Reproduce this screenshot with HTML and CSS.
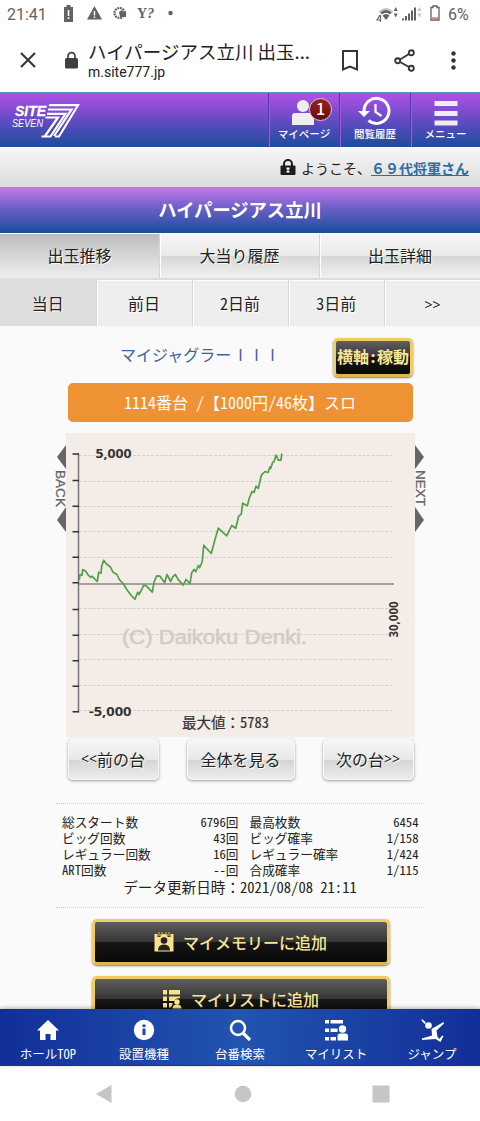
FILE: index.html
```html
<!DOCTYPE html>
<html lang="ja">
<head>
    <meta charset="UTF-8">
    <meta name="viewport" content="width=device-width, initial-scale=1.0">
    <title>ハイパージアス立川 出玉推移</title>
    <link rel="stylesheet" href="styles.css">
</head>
<body>
<div class="screen">

    <div class="status">
        <span class="time">21:41</span>
        <svg class="status-left" width="120" height="20" viewBox="0 0 120 20" fill="#626262">
            <path d="M4 3h2.500V1h4v2H13v15H4z"/>
            <path d="M7.700 6h1.600v6H7.700zM7.700 13.200h1.600v1.800H7.700z" fill="#fff"/>
            <path d="M34.500 2L42 15.500H27z"/>
            <path d="M33.700 7h1.500v4.500h-1.500zM33.700 12.500h1.500V14h-1.500z" fill="#fff"/>
            <circle cx="59.500" cy="9" r="5" fill="none" stroke="#626262" stroke-width="2.200" stroke-dasharray="1.800 .8"/>
            <path d="M59 8l3-2 1 2 3-1v6h-6z"/>
            <circle cx="110.500" cy="9" r="2.200"/>
        </svg>
        <span class="yahoo">Y<i>?</i></span>
        <svg class="status-right" width="66" height="20" viewBox="0 0 66 20">
            <path d="M1.500 7.500q7.500-7 15 0l-2 2q-5.500-5-11 0z" fill="#c4c4c4"/>
            <path d="M3.500 8.500q5.500-5 11 0l-1.500 2q-4-3.500-8 0zM5.500 11.500q3.500-3 7 0L9 16z" fill="#626262"/>
            <path d="M3 11l-3 5h4M3.500 11v7" fill="none" stroke="#626262" stroke-width="1.200"/>
            <path d="M18.700 3l2 4h-4zM18.700 13.500l-2-4h4z" fill="#626262"/>
            <path d="M25 16.500h2v-2h-2zM28 16.500h2V12h-2zM31 16.500h2V9.500h-2zM34 16.500h2V6.500h-2zM37 16.500h2V3.500h-2z" fill="#626262"/>
            <path d="M42.500 3l2 4h-4zM42.500 13.500l-2-4h4z" fill="#c4c4c4"/>
            <path d="M54 3.500h2V2h4v1.500h2V16h-8z" fill="none" stroke="#626262" stroke-width="1.300"/>
            <path d="M54.700 14h6.600" stroke="#e0755c" stroke-width="1.600"/>
        </svg>
        <span class="percent">6%</span>
    </div>

    <div class="browser-bar">
        <svg class="close" width="16" height="16" viewBox="0 0 16 16"><path d="M1 1l14 14M15 1L1 15" stroke="#33373a" stroke-width="2.100"/></svg>
        <svg class="lock" width="13" height="17" viewBox="0 0 13 17">
            <rect y="6" width="13" height="10.500" rx="1.500" fill="#3c4043"/>
            <path d="M3 7V4.200a3.500 3.500 0 0 1 7 0V7" fill="none" stroke="#3c4043" stroke-width="1.700"/>
        </svg>
        <div class="page-info">
            <div class="page-title">ハイパージアス立川 出玉...</div>
            <div class="page-url">m.site777.jp</div>
        </div>
        <svg class="bookmark" width="16" height="21" viewBox="0 0 16 21"><path d="M1 1h14v18.500l-7-3-7 3z" fill="none" stroke="#33373a" stroke-width="2"/></svg>
        <svg class="share" width="21" height="23" viewBox="0 0 21 23" fill="none" stroke="#33373a" stroke-width="1.900">
            <path d="M6 10.500l9-5.500M6 13l9 5"/><circle cx="3.700" cy="11.700" r="2.500"/><circle cx="17.300" cy="3.700" r="2.500"/><circle cx="17.300" cy="19.300" r="2.500"/>
        </svg>
        <svg class="more" width="5" height="19" viewBox="0 0 5 19" fill="#33373a"><circle cx="2.500" cy="2.500" r="2.200"/><circle cx="2.500" cy="9.500" r="2.200"/><circle cx="2.500" cy="16.500" r="2.200"/></svg>
    </div>

    <div class="header">
        <div class="logo">
            <svg width="70" height="36" viewBox="0 0 70 36">
                <text class="logo-site" x="4" y="13.500" textLength="31" lengthAdjust="spacingAndGlyphs">SITE</text>
                <text class="logo-seven" x="1" y="24.500" textLength="31" lengthAdjust="spacingAndGlyphs">SEVEN</text>
                <g fill="none" stroke="#fff" stroke-width="2.200">
                    <path d="M38 3.200h29L48 34.500h-4"/>
                    <path d="M37 7.500h23.500L43 34"/>
                    <path d="M36 11.800h18.500L39.500 34.500h-9"/>
                    <path d="M34.500 15.500h12.500L34 34"/>
                </g>
            </svg>
        </div>
        <div class="menu">
            <div class="icon-box">
                <svg width="40" height="34" viewBox="0 0 40 34" fill="#eee">
                    <circle cx="19" cy="13" r="6"/><path d="M8 32V23q0-3 3-3h16q3 0 3 3v9z"/>
                </svg>
                <span class="badge">1</span>
            </div>
            <span>マイページ</span>
        </div>
        <div class="menu">
            <svg width="40" height="34" viewBox="0 0 40 34">
                <path d="M9 18A12.500 12.500 0 1 1 13.500 27.500" fill="none" stroke="#fff" stroke-width="3"/>
                <path d="M3 18h12l-6 6z" fill="#fff"/>
                <path d="M20.500 11v8l6 4" fill="none" stroke="#fff" stroke-width="2.200"/>
            </svg>
            <span>閲覧履歴</span>
        </div>
        <div class="menu">
            <svg width="40" height="34" viewBox="0 0 40 34" fill="#eee"><path d="M8.500 8h23v5h-23zM8.500 18h23v5h-23zM8.500 27.500h23v5h-23z"/></svg>
            <span>メニュー</span>
        </div>
    </div>

    <div class="welcome">
        <svg width="16" height="17" viewBox="0 0 16 17">
            <path d="M4 8V5a4 4 0 0 1 8 0v3" fill="none" stroke="#1c1c1c" stroke-width="2"/>
            <rect x=".5" y="6.500" width="15" height="9.500" rx="1" fill="#1c1c1c"/>
            <path d="M6.500 8.500h3v2h-1V12h1v1.500h-3V12h1v-1.500h-1z" fill="#fff"/>
        </svg>
        <span>ようこそ、</span><a href="#">６９代将軍さん</a>
    </div>

    <h1>ハイパージアス立川</h1>

    <div class="tabs">
        <div class="tab active">出玉推移</div>
        <div class="tab">大当り履歴</div>
        <div class="tab">出玉詳細</div>
    </div>

    <div class="days">
        <div class="day active">当日</div>
        <div class="day">前日</div>
        <div class="day">2日前</div>
        <div class="day">3日前</div>
        <div class="day"><span class="arrows">&gt;&gt;</span></div>
    </div>

    <div class="content">
        <div class="machine">
            <span class="machine-name">マイジャグラー<span class="roman">III</span></span>
            <button class="gold axis">横軸:稼動</button>
        </div>
        <div class="number">1114番台 /【1000円/46枚】スロ</div>

        <div class="chart-row">
            <svg class="side" width="12" height="90" viewBox="0 0 12 90" fill="#666">
                <path d="M12 0v24L3 12zM12 62v25L3 75z"/>
                <text class="side-text" transform="translate(1.500 25) rotate(90)" textLength="37" lengthAdjust="spacingAndGlyphs">BACK</text>
            </svg>
            <svg class="chart" width="349" height="304" viewBox="66 433.500 349 304">
                <g stroke="#d5d0cd" stroke-dasharray="3 1.500">
                    <path d="M79 456h315M79 482h315M79 507h315M79 532h315M79 558h315M79 609h315M79 635h315M79 660h315M79 686h315M79 711h315"/>
                </g>
                <text class="copyright" x="122" y="644.500" textLength="185" lengthAdjust="spacingAndGlyphs">(C) Daikoku Denki.</text>
                <path d="M78.500 454v259" stroke="#777" stroke-width="1.500"/>
                <path d="M72.500 454.500h6.500M72.500 481h6.500M72.500 506.700h6.500M72.500 532.300h6.500M72.500 557.700h6.500M72.500 583.300h6.500M72.500 610h6.500M72.500 635.700h6.500M72.500 661.300h6.500M72.500 686.700h6.500M72.500 712.300h6.500" stroke="#333" stroke-width="1.500"/>
                <path d="M79 584.500h315" stroke="#888" stroke-width="1.600"/>
                <polyline class="line" points="79.3,580.7 80,575 82,575.7 82.7,570 85.7,571.7 88.3,575.7 90.7,578 92,576.7 97.3,582 98.7,572.7 101,573.7 101.7,566.7 103.7,560.7 106.7,564.7 110.3,567.3 113,572.7 117,575 119.3,580 123.3,584.3 127.3,590.7 131.3,596 135,599.7 137.7,592.7 139,595 141.7,590 143.7,585.7 146.3,586.3 152.3,592.7 154,582.7 156.7,576.3 160,576.7 164.7,583.3 167,575 170.7,582 172.7,577.3 175.3,575 178.7,580.7 183.3,585.7 186,580 190,584 191.7,573.3 194,570 195.7,572.3 198.3,566 199.7,568.3 202.3,562 203.7,545.7 211.3,554 215,540 218.3,528.7 226.7,536.3 231.7,526 235.7,528.7 238.7,516.7 241.3,514.7 242.7,503.7 247.3,506.3 249.3,498.7 252,492 254,493 256,486.7 258.3,489 261.3,475.7 265,472 268,473 270,467.3 270.7,469 272.7,462.7 274,462.3 276,455.7 278.3,460.7 281,460.7 281.7,454"/>
                <text class="scale" x="95.500" y="458" textLength="36" lengthAdjust="spacingAndGlyphs">5,000</text>
                <text class="scale" x="89" y="716" textLength="42.500" lengthAdjust="spacingAndGlyphs">-5,000</text>
                <text class="scale" transform="translate(397.500 638) rotate(-90)" textLength="36" lengthAdjust="spacingAndGlyphs">30,000</text>
                <text class="max" x="182" y="728">最大値：<tspan class="half">5783</tspan></text>
            </svg>
            <svg class="side" width="12" height="90" viewBox="0 0 12 90" fill="#666">
                <path d="M0 0v24l9-12zM0 62v25l9-12z"/>
                <text class="side-text" transform="translate(.5 25) rotate(90)" textLength="36" lengthAdjust="spacingAndGlyphs">NEXT</text>
            </svg>
        </div>

        <div class="pager">
            <button class="silver"><span class="arrows">&lt;&lt;</span>前の台</button>
            <button class="silver wide">全体を見る</button>
            <button class="silver">次の台<span class="arrows">&gt;&gt;</span></button>
        </div>

        <div class="data">
            <div class="stats">
                <span>総スタート数</span><span class="value">6796回</span><span>最高枚数</span><span class="value">6454</span>
                <span>ビッグ回数</span><span class="value">43回</span><span>ビッグ確率</span><span class="value">1/158</span>
                <span>レギュラー回数</span><span class="value">16回</span><span>レギュラー確率</span><span class="value">1/424</span>
                <span>ART回数</span><span class="value">--回</span><span>合成確率</span><span class="value">1/115</span>
            </div>
            <div class="updated">データ更新日時：<span class="half">2021/08/08 21:11</span></div>
        </div>

        <button class="gold add">
            <svg width="20" height="20" viewBox="0 0 20 20">
                <path d="M.5 2h3v3h3V2h7v3h3V2h3v17.500H.5z" fill="#f8e38c"/>
                <path d="M5 0v4M8 0v3M12 0v3M15 0v4" stroke="#b99d47" stroke-width="1.400"/>
                <circle cx="10" cy="8.500" r="3.300" fill="#222"/><path d="M4 18.500q0-6 6-6t6 6z" fill="#222"/>
            </svg>
            <span>マイメモリーに追加</span>
        </button>
        <button class="gold add">
            <svg width="20" height="20" viewBox="0 0 20 20" fill="#f8e38c">
                <path d="M1 1h4v4.500H1zM7 1h11v4.500H7zM1 7.500h4V12H1zM7 7.500h11V9q-5 0-5.500 3H7zM1 14h4v4.500H1zM7 14h3.500v1.500L8.500 18.500H7z"/>
                <circle cx="15" cy="13" r="2.700"/><path d="M10.500 19.500q0-4 4.500-4t4.500 4z"/>
            </svg>
            <span>マイリストに追加</span>
        </button>
    </div>

    <div class="footer">
        <div class="footer-item">
            <svg width="24" height="22" viewBox="0 0 24 22" fill="#fff"><path d="M12 0l11 10.500h-3V20h-5.500v-6h-5v6H4v-9.500H1z"/></svg>
            <span>ホールTOP</span>
        </div>
        <div class="footer-item">
            <svg width="24" height="22" viewBox="0 0 24 22"><circle cx="12" cy="10" r="10.200" fill="#fff"/><path d="M10.500 4.500h3V7h-3zM10.500 8.500h3V15h-3z" fill="#1c46a8"/></svg>
            <span>設置機種</span>
        </div>
        <div class="footer-item">
            <svg width="24" height="22" viewBox="0 0 24 22" fill="none" stroke="#fff"><circle cx="10" cy="8" r="7" stroke-width="2.500"/><path d="M15 13l7 7" stroke-width="3.200"/></svg>
            <span>台番検索</span>
        </div>
        <div class="footer-item">
            <svg width="24" height="22" viewBox="0 0 24 22" fill="#fff">
                <path d="M1 0h4v3.500H1zM6.500 0H19v3.500H6.500zM1 8.500h4V12H1zM6.500 8.500h7V12h-7zM1 17h4v3.500H1zM6.500 17h5.500v3.500H6.500z"/>
                <circle cx="18.500" cy="9" r="3.700"/><path d="M13.500 20.500V16q0-2.500 2.500-2.500h5.500q2.500 0 2.500 2.500v4.500z"/>
            </svg>
            <span>マイリスト</span>
        </div>
        <div class="footer-item">
            <svg width="24" height="22" viewBox="0 0 24 22" fill="#fff">
                <circle cx="8.500" cy="5.500" r="3.300"/>
                <path d="M2-1l4 3.500L4.500 4 1.500.5zM11.500 9L23.500 2l.5 1.500-7.500 7 1 6.500 2 2 2.500-3.500 1.500.5-3 6-5-3-13.500 1L2 18.500l10-3z"/>
            </svg>
            <span>ジャンプ</span>
        </div>
    </div>

    <div class="system-nav">
        <svg width="18" height="20" viewBox="0 0 18 20" fill="#c6c6c6"><path d="M16.500 1v18L1 10z"/></svg>
        <svg width="18" height="20" viewBox="0 0 18 20" fill="#c6c6c6"><circle cx="9" cy="10" r="8.300"/></svg>
        <svg width="18" height="20" viewBox="0 0 18 20" fill="#c6c6c6"><rect x=".5" y="1.500" width="17" height="17" rx="1"/></svg>
    </div>

</div>
</body>
</html>
```

FILE: styles.css
```css
* {
    box-sizing: border-box;
}

body {
    margin: 0;
    font-family: "Noto Sans CJK JP", sans-serif;
    font-size: 16px;
    color: #222;
    background: #fff;
}

svg {
    display: block;
    flex: none;
    overflow: visible;
}

button {
    font-family: inherit;
    font-size: 16px;
    padding: 0;
    white-space: nowrap;
}

.screen {
    display: flex;
    flex-direction: column;
    width: 480px;
    height: 1121px;
    overflow: hidden;
}

/* phone status bar */
.status {
    display: flex;
    align-items: center;
    height: 28px;
    padding: 0 11px 0 7px;
    font-family: Roboto, sans-serif;
    font-size: 16px;
    color: #626262;
}

.time {
    width: 53px;
}

.status-left {
    margin-top: -1px;
}

.yahoo {
    margin-left: -43px;
    font-family: "Liberation Serif", serif;
    font-weight: bold;
    font-size: 14px;
}

.status-right {
    margin-left: auto;
}

.percent {
    margin-left: 5px;
    width: 21px;
}

.browser-bar {
    display: flex;
    align-items: center;
    height: 64px;
    padding-left: 20px;
}

.lock {
    margin-left: 29px;
}

.page-info {
    width: 225px;
    margin: -3px 29px 0 10px;
    color: #202124;
}

.page-title {
    font-size: 18.500px;
    line-height: 26px;
    white-space: nowrap;
}

.page-url {
    font-family: Roboto, sans-serif;
    font-size: 14px;
    line-height: 16px;
}

.share {
    margin-left: 36px;
}

.more {
    margin-left: 36px;
}

/* site header */
.header {
    display: flex;
    height: 55px;
    border-top: 1px solid #5a91b5;
    background: linear-gradient(#b052e8, #6c4bc8 45%, #1b4c9b);
}

.logo {
    flex: 1;
    padding: 9px 0 0 11px;
}

.logo-site,
.logo-seven {
    font-family: "Liberation Sans", sans-serif;
    font-style: italic;
    fill: #fff;
}

.logo-site {
    font-size: 15px;
    font-weight: bold;
    stroke: #fff;
    stroke-width: .300px;
}

.logo-seven {
    font-size: 10.500px;
}

.menu {
    display: flex;
    flex-direction: column;
    align-items: center;
    width: 71px;
    border-left: 1px solid #5534ac;
    box-shadow: inset 1px 0 #ab55e0;
    font-size: 10.500px;
    font-weight: 500;
    line-height: 14px;
    color: #fff;
}

.menu:last-child {
    width: 70px;
}

.icon-box {
    position: relative;
}

.badge {
    position: absolute;
    left: 25px;
    top: 5px;
    width: 23px;
    height: 23px;
    border: 1.500px solid #ddc3ce;
    border-radius: 50%;
    background: linear-gradient(#9d2020, #650c0c);
    font-size: 16px;
    line-height: 19px;
    text-align: center;
}

.welcome {
    display: flex;
    align-items: center;
    justify-content: flex-end;
    height: 40px;
    padding-right: 11px;
    border-top: 1px solid #fff;
    background: linear-gradient(#f6f6f6, #dcdcdc);
    font-size: 14px;
}

.welcome span {
    margin-left: 5px;
}

.welcome a {
    font-weight: bold;
    color: #2c6da3;
}

h1 {
    height: 46px;
    margin: 0;
    background: linear-gradient(#c778e9, #6d60c8 45%, #1a4d9c);
    font-size: 18.300px;
    line-height: 45px;
    text-align: center;
    color: #fff;
}

.tabs {
    display: flex;
    height: 47px;
    border-top: 1px solid #fff;
    border-bottom: 2px solid #dcdcdc;
}

.tab {
    width: 160px;
    border-right: 1px solid #d5d5d5;
    box-shadow: inset 1px 0 #fff;
    background: linear-gradient(#f6f6f6, #eaeaea 50%, #d6d6d6 50%, #f1f1f1);
    line-height: 43px;
    text-align: center;
    text-shadow: 1px 1px #fff;
}

.tab.active {
    box-shadow: none;
    background: linear-gradient(#bdbdbd, #eee);
}

.tab:last-child,
.day:last-child {
    border-right: none;
}

.days {
    display: grid;
    grid-template-columns: 96.500px 96px 96px 96.500px 95px;
    height: 46px;
    border-bottom: 1px solid #ddd;
}

.day {
    border-right: 1px solid #d8d8d8;
    box-shadow: inset 1px 1px #fff;
    background: #eee;
    font-feature-settings: "hwid";
    line-height: 46px;
    text-align: center;
    text-shadow: 1px 1px #fff;
}

.day.active {
    box-shadow: none;
    background: #dedede;
}

.arrows {
    font-family: "Noto Sans", sans-serif;
    font-size: 14px;
}

/* machine data */
.content {
    display: flex;
    flex-direction: column;
    align-items: center;
    flex: 1;
    min-height: 0;
    overflow: hidden;
    background: #fafafa;
}

.machine {
    display: flex;
    align-items: center;
    justify-content: space-between;
    align-self: flex-start;
    flex: none;
    width: 293px;
    height: 40px;
    margin: 11px 0 0 120px;
}

.machine-name {
    margin-top: -6px;
    color: #41669f;
}

.roman {
    margin-left: 7px;
    font-family: "Liberation Sans", sans-serif;
    letter-spacing: 11.600px;
}

.gold {
    border: 3px solid #f0cd62;
    border-bottom-color: #d9b64f;
    border-radius: 5px;
    background: linear-gradient(#606060, #343434 50%, #171717 50%, #080808);
    box-shadow: 0 1px 2px #777;
    color: #f7e596;
}

.axis {
    display: flex;
    align-items: center;
    justify-content: center;
    width: 80px;
    height: 39px;
    padding-bottom: 2px;
    font-weight: bold;
    font-feature-settings: "hwid";
}

.number {
    flex: none;
    width: 345px;
    height: 39px;
    margin-top: 6px;
    border-radius: 5px;
    background: #ef9234;
    font-feature-settings: "hwid";
    line-height: 38px;
    text-align: center;
    color: #fff;
}

.chart-row {
    display: flex;
    flex: none;
    width: 373px;
    margin-top: 11px;
}

.side {
    margin-top: 12px;
}

.side-text {
    font-family: "Liberation Sans", sans-serif;
    font-size: 13px;
    stroke: #666;
    stroke-width: .300px;
}

.chart {
    background: #f4ece7;
}

.copyright {
    font-family: "Liberation Sans", sans-serif;
    font-size: 20px;
    fill: #d1cbc7;
    stroke: #d1cbc7;
    stroke-width: .500px;
}

.line {
    fill: none;
    stroke: #51a04a;
    stroke-width: 1.700px;
    stroke-linejoin: round;
}

.scale {
    font-family: "Open Sans", sans-serif;
    font-size: 12.500px;
    font-weight: bold;
    fill: #333;
}

.max {
    font-size: 14.500px;
    fill: #333;
    stroke: #333;
    stroke-width: .200px;
}

.half {
    font-feature-settings: "hwid";
}

.pager {
    display: flex;
    justify-content: space-between;
    flex: none;
    width: 346px;
    margin: 2px 0 0 1px;
}

.silver {
    display: flex;
    align-items: center;
    justify-content: center;
    width: 91px;
    height: 41px;
    padding-bottom: 2px;
    border: 1px solid #f6f6f6;
    border-radius: 5px;
    background: linear-gradient(#f6f6f6, #e8e8e8 50%, #d4d4d4 50%, #ededed);
    box-shadow: 0 1px 3px #999;
    color: #222;
    text-shadow: 1px 1px #fff;
}

.silver.wide {
    width: 108px;
}

.data {
    flex: none;
    width: 368px;
    height: 105px;
    margin-top: 23px;
    padding: 10px 6px 0;
    border-top: 1px dotted #ccc;
    border-bottom: 1px dotted #ccc;
}

.stats {
    display: grid;
    grid-template-columns: 105px 71.500px 108px 72px;
    font-feature-settings: "hwid";
    font-size: 12.700px;
    line-height: 16px;
}

.stats span:nth-child(4n + 3) {
    padding-left: 11px;
}

.value {
    text-align: right;
}

.updated {
    font-size: 14.600px;
    line-height: 18px;
    text-align: center;
}

.add {
    display: flex;
    align-items: center;
    justify-content: center;
    gap: 9px;
    flex: none;
    width: 298px;
    height: 46px;
    margin: 11px 0 0 1px;
    padding-bottom: 1px;
    font-weight: 500;
}

/* fixed menus */
.footer {
    display: flex;
    flex: none;
    position: relative;
    height: 57px;
    padding-top: 11px;
    border-bottom: 1px solid #14358a;
    background: linear-gradient(90deg, #122e99, #2254b0 50%, #122e99);
    box-shadow: 0 -1px 4px rgba(0, 0, 0, .3);
}

.footer-item {
    display: flex;
    flex-direction: column;
    align-items: center;
    gap: 4px;
    width: 96px;
    font-size: 12.500px;
    font-feature-settings: "hwid";
    line-height: 16px;
    color: #fff;
}

.system-nav {
    display: flex;
    align-items: center;
    justify-content: space-between;
    flex: none;
    height: 55px;
    padding: 0 90px 0 95px;
    background: #fff;
}
```
